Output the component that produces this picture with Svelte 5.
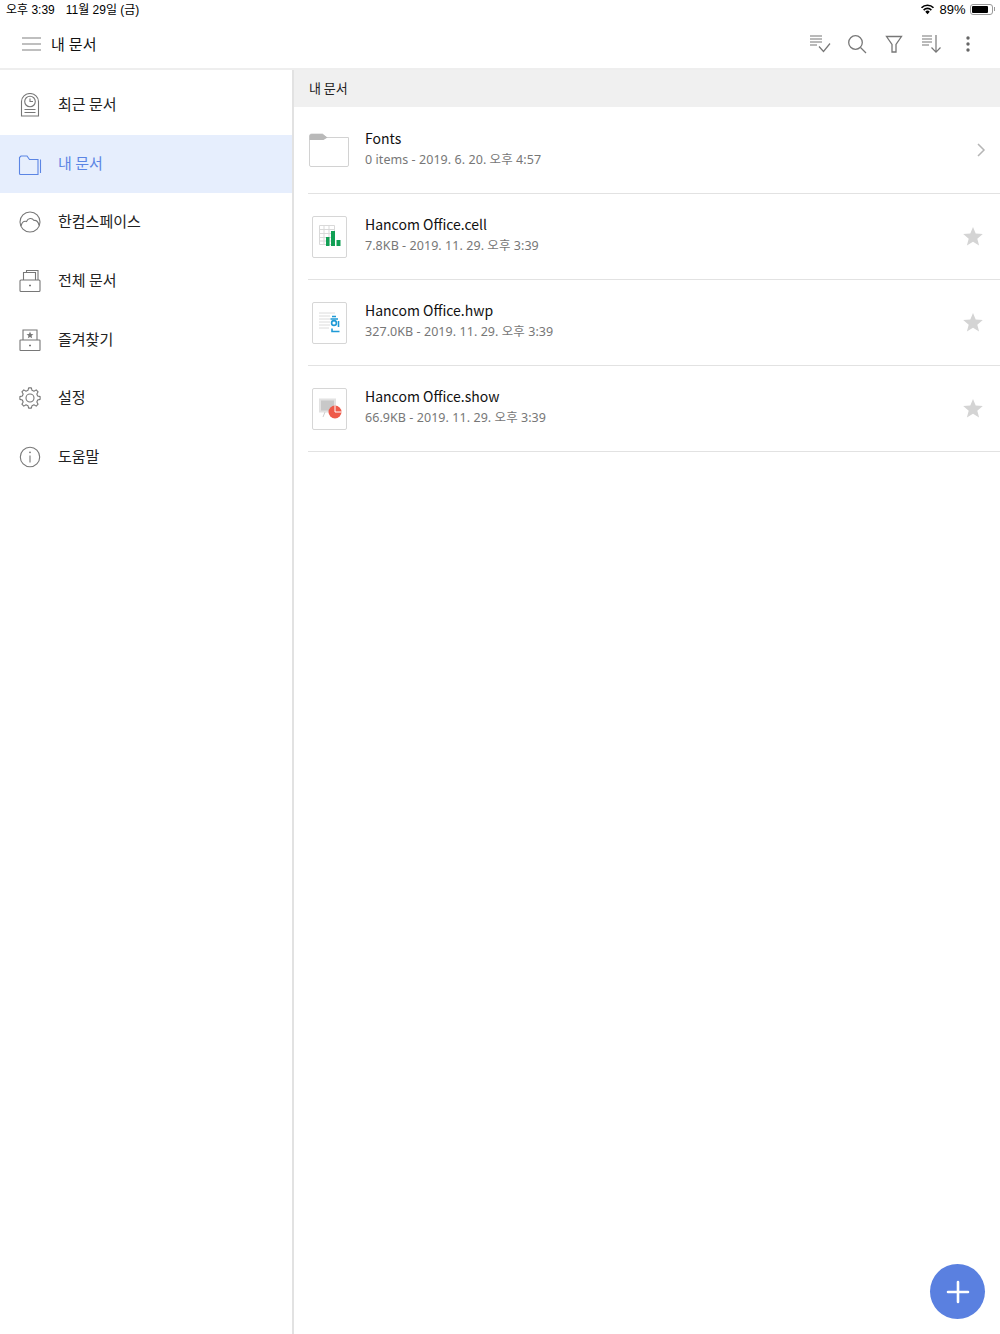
<script>
  const navItems = [
    { key: 'recent', label: '최근 문서' },
    { key: 'mine', label: '내 문서', active: true },
    { key: 'space', label: '한컴스페이스' },
    { key: 'all', label: '전체 문서' },
    { key: 'fav', label: '즐겨찾기' },
    { key: 'settings', label: '설정' },
    { key: 'help', label: '도움말' }
  ];

  const files = [
    { kind: 'folder', name: 'Fonts', meta: '0 items - 2019. 6. 20. 오후 4:57' },
    { kind: 'cell', name: 'Hancom Office.cell', meta: '7.8KB - 2019. 11. 29. 오후 3:39' },
    { kind: 'hwp', name: 'Hancom Office.hwp', meta: '327.0KB - 2019. 11. 29. 오후 3:39' },
    { kind: 'show', name: 'Hancom Office.show', meta: '66.9KB - 2019. 11. 29. 오후 3:39' }
  ];

  // eight-toothed gear outline for the settings icon
  function gearPath(cx, cy, outer, inner, teeth) {
    const pts = [];
    const step = (Math.PI * 2) / teeth;
    for (let i = 0; i < teeth; i++) {
      const a = i * step;
      const spots = [
        [a - step * 0.17, outer],
        [a + step * 0.17, outer],
        [a + step * 0.33, inner],
        [a + step * 0.67, inner]
      ];
      for (const [ang, r] of spots) {
        pts.push((cx + r * Math.sin(ang)).toFixed(2) + ' ' + (cy - r * Math.cos(ang)).toFixed(2));
      }
    }
    return 'M' + pts.join('L') + 'Z';
  }

  const gear = gearPath(12, 12, 10.2, 7.9, 8);
</script>

<div class="page">
  <div class="status">
    <div class="status-left">
      <span>오후 3:39</span>
      <span>11월 29일 (금)</span>
    </div>
    <div class="status-right">
      <svg width="15" height="12" viewBox="0 0 16 12">
        <path d="M8 11.500 5.600 8.800a3.400 3.400 0 0 1 4.800 0Z" fill="#000" />
        <path d="M3.900 7.100a5.800 5.800 0 0 1 8.200 0" fill="none" stroke="#000" stroke-width="1.800" />
        <path d="M1.600 4.700a9 9 0 0 1 12.800 0" fill="none" stroke="#000" stroke-width="1.800" />
      </svg>
      <span class="pct">89%</span>
      <div class="battery"><div class="battery-fill"></div></div>
      <div class="battery-tip"></div>
    </div>
  </div>

  <header class="toolbar">
    <div class="toolbar-left">
      <svg class="burger" width="20" height="14" viewBox="0 0 20 14">
        <path d="M0 1h19M0 7h19M0 13h19" stroke="#808080" stroke-width="1.200" fill="none" />
      </svg>
      <h1>내 문서</h1>
    </div>
    <div class="toolbar-right">
      <span class="tool">
        <svg width="22" height="20" viewBox="0 0 22 20" fill="none" stroke="#777" stroke-width="1.200">
          <path d="M1 2h12M1 5h12M1 8h12M1 11h7M10 12.500l4.500 5L21 9.500" />
        </svg>
      </span>
      <span class="tool">
        <svg width="20" height="20" viewBox="0 0 20 20" fill="none" stroke="#777" stroke-width="1.300">
          <circle cx="8.500" cy="8.500" r="6.800" /><path d="M13.500 13.500l5.500 5.500" />
        </svg>
      </span>
      <span class="tool">
        <svg width="18" height="20" viewBox="0 0 18 20" fill="none" stroke="#777" stroke-width="1.300">
          <path d="M1.500 2.500h15l-5.500 8v7.500h-4v-7.500z" />
        </svg>
      </span>
      <span class="tool">
        <svg width="21" height="20" viewBox="0 0 21 20" fill="none" stroke="#777" stroke-width="1.200">
          <path d="M1 2h10M1 5h10M1 8h10M1 11h7M15 1v17M10.500 13.500l4.500 4.700 4.500-4.700" />
        </svg>
      </span>
      <span class="tool">
        <svg width="6" height="16" viewBox="0 0 6 16" fill="#666">
          <circle cx="3" cy="2" r="1.700" /><circle cx="3" cy="8" r="1.700" /><circle cx="3" cy="14" r="1.700" />
        </svg>
      </span>
    </div>
  </header>

  <div class="body">
    <aside class="sidebar">
      {#each navItems as item}
        <div class="nav-item" class:active={item.active}>
          <svg class="nav-icon" width="24" height="24" viewBox="0 0 24 24" fill="none" stroke="#777" stroke-width="1.100">
            {#if item.key === 'recent'}
              <path d="M3.500 23V8.500a8.500 8 0 0 1 17 0V23z" />
              <circle cx="12" cy="8.500" r="5.300" />
              <path d="M12 5.500v3h3M6.500 16.500h11M6.500 19.500h11" />
            {:else if item.key === 'mine'}
              <path d="M1.500 5.500V21.500a1 1 0 0 0 1 1h17.500V7.500H11.500L9 4H3z" stroke="#5b85e4" />
              <path d="M22.500 7.500v13.500" stroke="#5b85e4" />
            {:else if item.key === 'space'}
              <circle cx="12" cy="12" r="10" />
              <path d="M3 16c1-4 3-5.500 5.500-4.500 1.500-3.500 5.500-4 7.500-1 2.500-.5 4.500 1.500 5 5" />
            {:else if item.key === 'all'}
              <path d="M5.500 11V3.500h12V11M8.500 3.500V1.500h11.500v9.500" />
              <rect x="2" y="11" width="20" height="11.500" rx="1" />
              <path d="M11 16.500h2" stroke-width="1.500" />
            {:else if item.key === 'fav'}
              <path d="M5 12V2h14v10" />
              <rect x="2" y="12" width="20" height="10.500" rx="0.500" />
              <path d="M11 17.500h2" stroke-width="1.500" />
              <path d="M12 3.500l1 2.500 2.500.2-2 1.600.7 2.500L12 9l-2.200 1.300.7-2.500-2-1.600 2.500-.2z" fill="#777" stroke="none" />
            {:else if item.key === 'settings'}
              <path d={gear} stroke-linejoin="round" />
              <circle cx="12" cy="12" r="4" />
            {:else}
              <circle cx="12" cy="12" r="9.700" />
              <path d="M12 10.500v7" />
              <circle cx="12" cy="7.300" r=".9" fill="#777" stroke="none" />
            {/if}
          </svg>
          <span>{item.label}</span>
        </div>
      {/each}
    </aside>

    <main class="content">
      <div class="crumb">내 문서</div>
      {#each files as file}
        <div class="row">
          <div class="thumb">
            {#if file.kind === 'folder'}
              <svg class="folder" width="40" height="34" viewBox="0 0 40 34">
                <path d="M.5 3a2 2 0 0 1 2-2h11l4 3.500H39.500V32a1.500 1.500 0 0 1-1.500 1.500H2A1.500 1.500 0 0 1 .5 32z" fill="#fff" stroke="#d2d2d2" />
                <path d="M.5 7V3a2 2 0 0 1 2-2h11l5 3.500-4 2.500z" fill="#b9b9b9" />
              </svg>
            {:else}
              <div class="doc">
                <svg width="26" height="26" viewBox="0 0 26 26">
                  {#if file.kind === 'cell'}
                    <path d="M1.500 1.500h15v19h-15zM1.500 5.500h15M1.500 9.500h15M1.500 13.500h15M1.500 17h15M6 1.500v19M11 1.500v19" fill="none" stroke="#d9d9d9" />
                    <rect x="8" y="13" width="3.500" height="9" fill="#11a055" />
                    <rect x="13" y="7" width="4" height="15" fill="#11a055" />
                    <rect x="18.500" y="16" width="4" height="6" fill="#11a055" />
                  {:else if file.kind === 'hwp'}
                    <path d="M1 3h16M1 6h11M1 9h11M1 12h11M1 15h11M1 18h10" stroke="#dcdcdc" fill="none" />
                    <g transform="translate(-2 0)" stroke="#1f9ad6" stroke-width="1.600" fill="none">
                      <path d="M16 6.500h4M14.500 9h7.500M16 18.500v3h7.500" />
                      <circle cx="18" cy="13" r="2.400" />
                      <path d="M22.500 11v6" />
                    </g>
                  {:else}
                    <rect x="1" y="2.500" width="17" height="14" fill="#e2e2e2" />
                    <rect x="3" y="4.500" width="13" height="10" fill="#c8c8c8" />
                    <path d="M7 16l-2 5M12 16l2 5" stroke="#cfcfcf" fill="none" />
                    <circle cx="17" cy="16" r="6.500" fill="#ee5a4a" />
                    <path d="M17 16V9.500M17 16h6.500" stroke="#fff" stroke-width="1" fill="none" />
                  {/if}
                </svg>
              </div>
            {/if}
          </div>
          <div class="info">
            <div class="name">{file.name}</div>
            <div class="meta">{file.meta}</div>
          </div>
          {#if file.kind === 'folder'}
            <svg class="chevron" width="9" height="14" viewBox="0 0 9 14" fill="none" stroke="#b5b5b5" stroke-width="1.500">
              <path d="M1 1l6 6-6 6" />
            </svg>
          {:else}
            <svg class="star" width="20" height="19" viewBox="0 0 20 19" fill="#d4d4d4">
              <path d="M10 0l2.700 6.600 7.100.5-5.500 4.600 1.800 6.900L10 14.800 3.900 18.600l1.800-6.900L.2 7.100l7.100-.5z" />
            </svg>
          {/if}
        </div>
      {/each}
    </main>
  </div>

  <button class="fab" aria-label="추가">
    <svg width="24" height="24" viewBox="0 0 24 24" stroke="#fff" stroke-width="2.600" stroke-linecap="round">
      <path d="M12 2v20M2 12h20" />
    </svg>
  </button>
</div>

<style>
  :global(body) {
    margin: 0;
    background: #fff;
  }

  .page {
    position: relative;
    width: 1000px;
    height: 1334px;
    overflow: hidden;
    display: flex;
    flex-direction: column;
    font-family: "Noto Sans CJK KR", "Noto Sans", sans-serif;
    color: #111;
  }

  /* status bar */
  .status {
    height: 20px;
    box-sizing: border-box;
    display: flex;
    justify-content: space-between;
    align-items: center;
    padding: 0 5px 2px 6px;
    font-family: "Liberation Sans", "Noto Sans CJK KR", sans-serif;
    font-size: 12px;
    color: #000;
  }

  .status-left {
    display: flex;
    gap: 11px;
    position: relative;
    top: -1px;
  }

  .status-right {
    display: flex;
    align-items: center;
  }

  .pct {
    margin-left: 4px;
    margin-right: 4px;
    font-size: 13px;
  }

  .battery {
    width: 23px;
    height: 11px;
    border: 1px solid #999;
    border-radius: 3px;
    padding: 1px;
    box-sizing: border-box;
  }

  .battery-fill {
    width: 89%;
    height: 100%;
    background: #000;
    border-radius: 1px;
  }

  .battery-tip {
    width: 1.500px;
    height: 4px;
    background: #999;
    margin-left: 1px;
  }

  /* toolbar */
  .toolbar {
    height: 48px;
    display: flex;
    justify-content: space-between;
    align-items: center;
    border-bottom: 2px solid #eeeeee;
  }

  .toolbar-left {
    display: flex;
    align-items: center;
    padding-left: 22px;
  }

  .burger {
    display: block;
  }

  h1 {
    margin: 0 0 0 9px;
    font-size: 15px;
    font-weight: 400;
    line-height: 20px;
    letter-spacing: 0.300px;
  }

  .toolbar-right {
    display: flex;
    align-items: center;
    padding-right: 13.500px;
  }

  .tool {
    width: 37px;
    display: flex;
    justify-content: center;
  }

  /* main area */
  .body {
    flex: 1;
    display: flex;
    min-height: 0;
  }

  .sidebar {
    width: 292px;
    flex: none;
    border-right: 2px solid #e2e2e2;
    padding-top: 6px;
  }

  .nav-item {
    height: 58.600px;
    display: flex;
    align-items: center;
    padding-left: 18px;
    font-size: 15px;
    color: #222;
  }

  .nav-item span {
    margin-left: 16px;
    position: relative;
    top: -1.500px;
  }

  .nav-icon {
    display: block;
  }

  .nav-item.active {
    background: #e6eefd;
    color: #5b85e4;
  }

  .content {
    flex: 1;
    min-width: 0;
  }

  .crumb {
    height: 37px;
    margin-bottom: 1px;
    background: #f0f0f0;
    display: flex;
    align-items: center;
    padding-left: 15px;
    font-size: 13px;
    color: #222;
    box-sizing: border-box;
    padding-bottom: 3px;
  }

  .row {
    height: 86px;
    box-sizing: border-box;
    margin-left: 14px;
    border-bottom: 1px solid #e2e2e2;
    display: flex;
    align-items: center;
    position: relative;
  }

  .thumb {
    width: 42px;
    display: flex;
    justify-content: center;
    flex: none;
  }

  .folder {
    margin-top: -1px;
  }

  .doc {
    width: 35px;
    height: 42px;
    box-sizing: border-box;
    border: 1.500px solid #d6d6d6;
    border-radius: 2px;
    background: #fff;
    display: flex;
    align-items: center;
    justify-content: center;
    padding: 0 0 0 4px;
  }

  .info {
    margin-left: 15px;
    flex: 1;
    margin-top: -4px;
  }

  .name {
    font-size: 14px;
    line-height: 20px;
    color: #111;
  }

  .meta {
    font-family: "Noto Sans", "Noto Sans CJK KR", sans-serif;
    font-size: 12.500px;
    letter-spacing: 0.060px;
    line-height: 20px;
    margin-top: 2px;
    color: #777;
  }

  .chevron {
    margin-right: 14px;
    margin-top: -1px;
  }

  .star {
    margin-right: 17px;
  }

  .fab {
    position: absolute;
    right: 15px;
    bottom: 15px;
    width: 55px;
    height: 55px;
    border: 0;
    padding: 0;
    border-radius: 50%;
    background: #5a80e0;
    display: flex;
    align-items: center;
    justify-content: center;
  }
</style>
